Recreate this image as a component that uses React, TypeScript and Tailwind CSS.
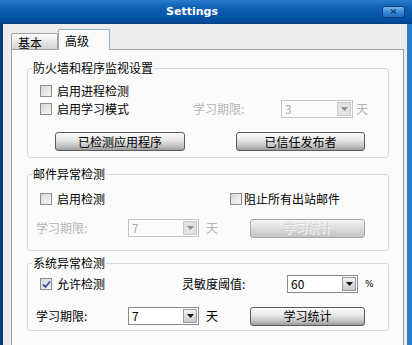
import React from "react";

const F = "font-['Noto_Sans_CJK_SC','Noto_Sans',sans-serif]";

function Check({ checked = false }: { checked?: boolean }) {
  return (
    <span className="w-[12px] h-[12px] shrink-0 border border-[#8c8c8c] bg-[linear-gradient(135deg,#d6d6d6,#f7f7f7)] flex items-center justify-center">
      {checked && (
        <svg width="9" height="9" viewBox="0 0 9 9">
          <path d="M1 4.5 L3.5 7 L8 1.5" fill="none" stroke="#3a4f9c" strokeWidth="1.8" />
        </svg>
      )}
    </span>
  );
}

function Combo({ value, disabled = false, w }: { value: string; disabled?: boolean; w: string }) {
  return (
    <div
      className={`${w} h-[18px] shrink-0 flex items-center border ${
        disabled ? "border-[#c4c4c4] bg-[#fbfbfb]" : "border-[#8a8a8a] bg-white"
      }`}
    >
      <span className={`flex-1 pl-[3px] text-[12px] leading-[14px] ${disabled ? "text-[#b0b0b0]" : "text-black"}`}>
        {value}
      </span>
      <span
        className={`w-[14px] h-[14px] mr-[1px] flex items-center justify-center border ${
          disabled ? "border-[#c9c9c9] bg-[#e2e2e2]" : "border-[#9a9a9a] bg-[linear-gradient(#f2f2f2,#c8c8c8)]"
        }`}
      >
        <svg width="7" height="4" viewBox="0 0 7 4">
          <path d="M0 0 H7 L3.5 4 Z" fill={disabled ? "#8f8f8f" : "#111"} />
        </svg>
      </span>
    </div>
  );
}

function Btn({ label, w, disabled = false }: { label: string; w: string; disabled?: boolean }) {
  return (
    <div
      className={`${w} h-[19px] shrink-0 rounded-[3px] border flex items-center justify-center text-[12px] leading-[14px] ${
        disabled
          ? "border-[#a8a8a8] bg-[linear-gradient(#f4f4f4,#dcdcdc_50%,#c4c4c4)] text-[#cfcfcf] [text-shadow:1px_1px_0_#f8f8f8]"
          : "border-[#5c5c5c] bg-[linear-gradient(#fbfbfb,#e8e8e8_40%,#c4c4c4_75%,#9c9c9c)] text-black"
      }`}
    >
      {label}
    </div>
  );
}

function Group({ title, className, children }: { title: string; className: string; children: React.ReactNode }) {
  return (
    <fieldset className={`w-[362px] border border-[#d3d9dd] rounded-[3px] ${className}`}>
      <legend className="ml-[4px] px-[1px] text-[12px] leading-[14px] text-black">{title}</legend>
      {children}
    </fieldset>
  );
}

export default function App() {
  return (
    <div className={`w-[412px] h-[345px] overflow-hidden flex flex-col bg-[#ececec] ${F}`}>
      {/* title bar */}
      <div className="h-[24px] shrink-0 flex items-center bg-[linear-gradient(#2a7bcb,#0f62b6_30%,#0656a8_70%,#03479a)] border-b border-[#0a3f80]">
        <div className="flex-1 text-center text-white font-bold text-[11px] font-['DejaVu_Sans',sans-serif] leading-[14px] pl-[2px]">
          Settings
        </div>
        <div className="w-[23px] h-[12px] mr-[7px] rounded-[3px] border border-[#0b3d7e] bg-[linear-gradient(#78b6ef,#3d8ad8_50%,#1f6cc0)] flex items-center justify-center">
          <svg width="7" height="5" viewBox="0 0 7 5">
            <path d="M1 0.5 L6 4.5 M6 0.5 L1 4.5" stroke="#123a6e" strokeWidth="1.2" />
          </svg>
        </div>
      </div>

      {/* body */}
      <div className="flex-1 flex flex-col border-l-[3px] border-l-[#083a80] border-r-[5px] border-r-[#2c7fd0] pl-[8px] pt-[5px]">
        {/* tabs */}
        <div className="h-[20px] flex items-end text-[12px] leading-[14px]">
          <div className="w-[47px] h-[16px] border border-b-0 border-[#9aa3a8] rounded-t-[2px] bg-[linear-gradient(#fdfdfd,#e4e4e4_60%,#d2d2d2)] pl-[6px] pt-[2px] text-black">
            基本
          </div>
          <div className="relative z-10 w-[52px] h-[21px] -mb-[1px] border border-b-0 border-[#8fb0c4] rounded-t-[2px] bg-[#fbfbfb] pl-[6px] pt-[4px] text-black">
            高级
          </div>
        </div>

        {/* panel */}
        <div className="w-[393px] flex-1 border border-b-0 border-[#9aa0a4] bg-[#fbfbfb] pl-[15px] pt-[11px] text-[12px] leading-[14px] text-black">
          <Group title="防火墙和程序监视设置" className="pb-[6px]">
            <div className="pt-[9px] pl-[12px] h-[23px] flex items-center gap-[5px]">
              <Check />
              <span>启用进程检测</span>
            </div>
            <div className="mt-[2px] pl-[12px] h-[18px] flex items-center">
              <div className="w-[153px] flex items-center gap-[5px]">
                <Check />
                <span>启用学习模式</span>
              </div>
              <span className="w-[88px] text-[#b4b4b4]">学习期限:</span>
              <Combo value="3" disabled w="w-[72px]" />
              <span className="ml-[3px] text-[#b4b4b4]">天</span>
            </div>
            <div className="mt-[14px] pl-[27px] flex gap-[51px]">
              <Btn label="已检测应用程序" w="w-[130px]" />
              <Btn label="已信任发布者" w="w-[129px]" />
            </div>
          </Group>

          <Group title="邮件异常检测" className="mt-[9px] pb-[13px]">
            <div className="pt-[11px] pl-[12px] h-[25px] flex items-center">
              <div className="w-[190px] flex items-center gap-[5px]">
                <Check />
                <span>启用检测</span>
              </div>
              <div className="flex items-center gap-[2px]">
                <Check />
                <span>阻止所有出站邮件</span>
              </div>
            </div>
            <div className="mt-[13px] pl-[8px] h-[18px] flex items-center">
              <span className="w-[92px] text-[#b4b4b4]">学习期限:</span>
              <Combo value="7" disabled w="w-[71px]" />
              <span className="ml-[7px] w-[44px] text-[#b4b4b4]">天</span>
              <Btn label="学习统计" w="w-[115px]" disabled />
            </div>
          </Group>

          <Group title="系统异常检测" className="mt-[5px] pb-[5px]">
            <div className="pt-[5px] pl-[12px] flex items-center">
              <div className="w-[142px] h-[18px] flex items-center gap-[5px]">
                <Check checked />
                <span>允许检测</span>
              </div>
              <span className="w-[105px]">灵敏度阈值:</span>
              <Combo value="60" w="w-[71px]" />
              <span className="ml-[7px] text-[9px] font-['DejaVu_Sans',sans-serif]">%</span>
            </div>
            <div className="mt-[14px] pl-[8px] h-[18px] flex items-center">
              <span className="w-[92px]">学习期限:</span>
              <Combo value="7" w="w-[71px]" />
              <span className="ml-[7px] w-[44px]">天</span>
              <Btn label="学习统计" w="w-[115px]" />
            </div>
          </Group>
        </div>
      </div>
    </div>
  );
}
